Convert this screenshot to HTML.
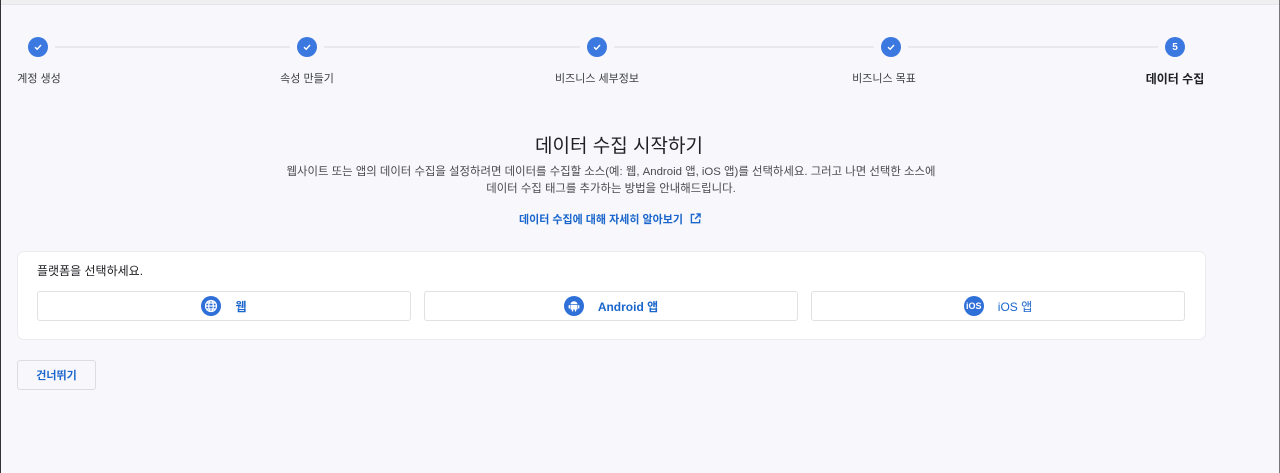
<!DOCTYPE html>
<html><head><meta charset="utf-8"><style>
*{margin:0;padding:0;box-sizing:border-box}
body{width:1280px;height:473px;background:#f8f7fb;font-family:"Liberation Sans","Noto Sans CJK KR",sans-serif;position:relative;overflow:hidden;color:#202124}
.a{position:absolute}
.topbar{left:0;top:0;width:1280px;height:5px;background:#efeff2;border-bottom:1px solid #e6e6ea}
.lb{left:0;top:0;width:1px;height:473px;background:#333}
.rb{right:0;top:0;width:1px;height:473px;background:#777}
.line{top:46px;height:2px;background:#e8e8ed}
.c{width:20px;height:20px;border-radius:50%;background:#3b78e0;top:37px;display:flex;align-items:center;justify-content:center;color:#fff;font-size:10px;font-weight:bold}
.lab{top:70px;font-size:11px;color:#3c4043;white-space:nowrap;transform:translateX(-50%)}
.card{left:17px;top:251px;width:1189px;height:89px;background:#fff;border:1px solid #ebebef;border-radius:7px}
.btn{top:291px;height:30px;width:374px;background:#fff;border:1px solid #e0e0e5;border-radius:3px;display:flex;align-items:center;justify-content:center;gap:14px;color:#1a66cc;font-size:12px;font-weight:bold}
.ic{width:20px;height:20px;border-radius:50%;background:#2f6fd8;display:flex;align-items:center;justify-content:center;color:#fff;font-size:8px;font-weight:bold}
</style></head><body>
<div class="a topbar"></div>
<div class="a lb"></div><div class="a rb"></div>
<div class="a line" style="left:55px;width:235px"></div>
<div class="a line" style="left:324px;width:256px"></div>
<div class="a line" style="left:614px;width:260px"></div>
<div class="a line" style="left:908px;width:250px"></div>
<svg width="0" height="0" style="position:absolute"><defs><symbol id="ck" viewBox="0 0 10 10"><path d="M2 5.2L4.2 7.2L8 3" fill="none" stroke="#fff" stroke-width="1.4"/></symbol></defs></svg>
<div class="a c" style="left:28px"><svg width="10" height="10"><use href="#ck"/></svg></div>
<div class="a c" style="left:297px"><svg width="10" height="10"><use href="#ck"/></svg></div>
<div class="a c" style="left:587px"><svg width="10" height="10"><use href="#ck"/></svg></div>
<div class="a c" style="left:881px"><svg width="10" height="10"><use href="#ck"/></svg></div>
<div class="a c" style="left:1165px">5</div>
<div class="a lab" style="left:39px">계정 생성</div>
<div class="a lab" style="left:307px">속성 만들기</div>
<div class="a lab" style="left:597px">비즈니스 세부정보</div>
<div class="a lab" style="left:884px">비즈니스 목표</div>
<div class="a lab" style="left:1175px;font-weight:bold;font-size:12px;color:#202124">데이터 수집</div>
<div class="a" style="left:0;width:1238px;top:131px;text-align:center;font-size:19px;color:#202124">데이터 수집 시작하기</div>
<div class="a" style="left:0;width:1222px;top:164px;text-align:center;font-size:11.4px;line-height:17px;color:#4a4a4f">웹사이트 또는 앱의 데이터 수집을 설정하려면 데이터를 수집할 소스(예: 웹, Android 앱, iOS 앱)를 선택하세요. 그러고 나면 선택한 소스에<br>데이터 수집 태그를 추가하는 방법을 안내해드립니다.</div>
<div class="a" style="left:0;width:1220px;top:211px;text-align:center;font-size:11px;color:#1a66cc;font-weight:bold">데이터 수집에 대해 자세히 알아보기 <svg width="11" height="11" viewBox="0 0 12 12" style="vertical-align:-1px;margin-left:4px"><path d="M5 1.5H1.5v9h9V7M7 1h4v4M11 1L5.5 6.5" fill="none" stroke="#1a66cc" stroke-width="1.5"/></svg></div>
<div class="a card"></div>
<div class="a" style="left:37px;top:262px;font-size:12px;color:#202124">플랫폼을 선택하세요.</div>
<div class="a btn" style="left:37px"><div class="ic"><svg width="14" height="14" viewBox="0 0 14 14"><g fill="none" stroke="#fff" stroke-width="1.2"><circle cx="7" cy="7" r="5.5"/><ellipse cx="7" cy="7" rx="2.3" ry="5.5"/><path d="M1.5 7h11M2.5 4h9M2.5 10h9"/></g></svg></div><span>웹</span></div>
<div class="a btn" style="left:424px"><div class="ic"><svg width="14" height="14" viewBox="0 0 14 14" fill="#fff"><path d="M3.5 6h7v4.5h-7z"/><path d="M3.5 5.3a3.5 3 0 0 1 7 0z"/><rect x="1.6" y="6" width="1.4" height="3.6" rx=".7"/><rect x="11" y="6" width="1.4" height="3.6" rx=".7"/><rect x="4.8" y="10" width="1.4" height="2.6" rx=".7"/><rect x="7.8" y="10" width="1.4" height="2.6" rx=".7"/></svg></div><span>Android 앱</span></div>
<div class="a btn" style="left:811px"><div class="ic" style="font-size:9px">iOS</div><span style="font-weight:normal">iOS 앱</span></div>
<div class="a" style="left:17px;top:360px;width:79px;height:30px;background:#f8f7fb;border:1px solid #dcdce2;border-radius:3px;font-size:11px;color:#1a66cc;display:flex;align-items:center;justify-content:center;font-weight:bold">건너뛰기</div>
</body></html>
